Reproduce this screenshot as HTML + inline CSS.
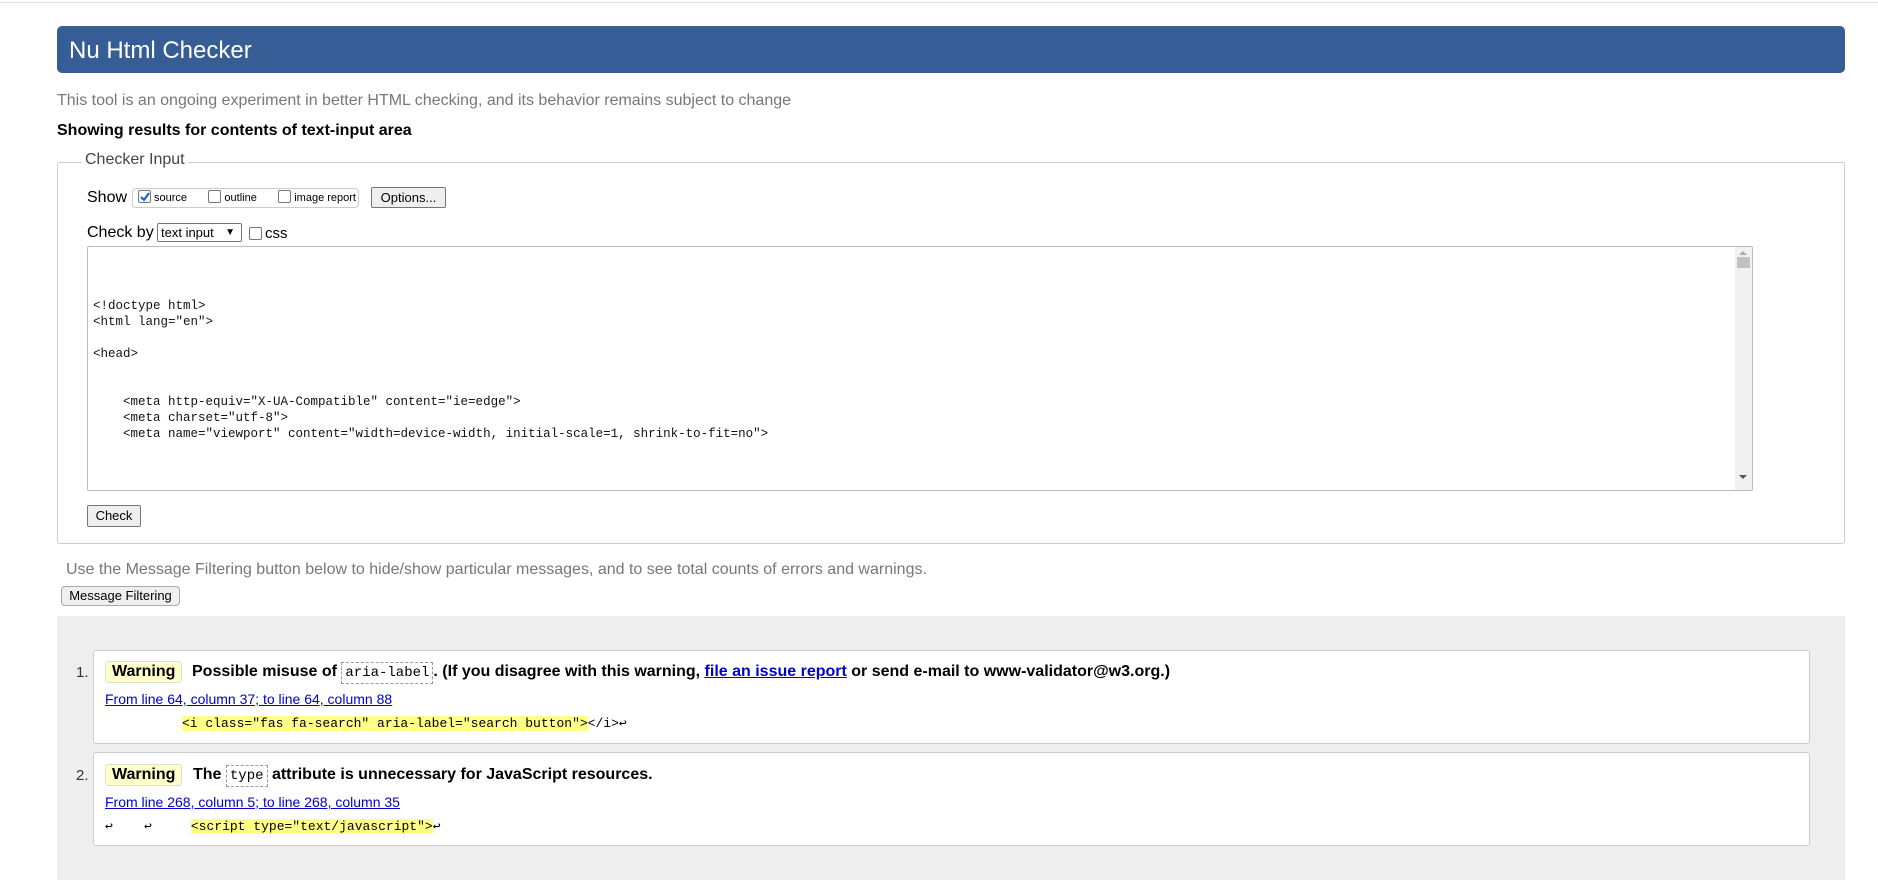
<!DOCTYPE html>
<html><head><meta charset="utf-8"><style>
*{box-sizing:border-box}
body{margin:0;width:1878px;height:882px;background:#fff;font-family:"Liberation Sans",Arial,sans-serif;position:relative;overflow:hidden;color:#000}
.a{position:absolute;white-space:nowrap}
.topline{left:0;top:0;width:1878px;height:3px;border-bottom:1px solid #ddd}
.hdr{left:57px;top:26px;width:1788px;height:47px;background:#365d95;border-radius:5px;color:#fff;font-size:24px;line-height:49px;padding-left:12px}
.grey{color:#777;font-size:16px}
.fs{left:57px;top:162px;width:1788px;height:382px;border:1px solid #ccc;border-radius:3px}
.leg{left:82px;top:151px;background:#fff;padding:0 3px;font-size:16px;color:#444}
.btn{background:#efefef;border:1px solid #767676;border-radius:2px;font-size:13px;text-align:center;color:#000}
.cb{display:inline-block;width:13px;height:13px;border:1px solid #767676;border-radius:2px;background:#fff;vertical-align:-2px;margin-right:3px}
.ta{left:87px;top:246px;width:1666px;height:245px;border:1px solid #bbb;border-radius:2px;background:#fff;overflow:hidden}
.code{position:absolute;left:5px;top:3px;font-family:"Liberation Mono",monospace;font-size:12.5px;line-height:16px;white-space:pre;color:#111}
.sb{position:absolute;right:0;top:0;width:17px;height:100%;background:#f1f1f1}
.res{left:57px;top:616px;width:1788px;height:264px;background:#eee}
.msg{left:93px;width:1717px;height:94px;background:#fff;border:1px solid #ccc;border-radius:3px}
.num{font-size:15px;color:#333}
.warn{background:#ffc;border:1px solid #ddd;border-radius:3px;font-weight:bold;font-size:16px;padding:0 6px;line-height:20px}
.mt{font-weight:bold;font-size:16px}
.ct{font-family:"Liberation Mono",monospace;font-weight:normal;font-size:14px;border:1px dashed #999;padding:2px 3px}
.lnk{color:#00c;text-decoration:underline;font-size:14px}
.hl{background:#ff8;}
.cd{font-family:"Liberation Mono",monospace;font-size:13px}
</style></head><body>
<div class="a topline"></div>
<div class="a hdr">Nu Html Checker</div>
<div class="a grey" style="left:57px;top:92px">This tool is an ongoing experiment in better HTML checking, and its behavior remains subject to change</div>
<div class="a" style="left:57px;top:122px;font-weight:bold;font-size:16px">Showing results for contents of text-input area</div>
<div class="a fs"></div>
<div class="a leg">Checker Input</div>
<div class="a" style="left:87px;top:189px;font-size:16px">Show</div>
<div class="a" style="left:132px;top:188px;width:227px;height:20px;border:1px solid #ccc;border-radius:4px;font-size:11px;line-height:19px;padding-left:5px"><span class="cb" style="background:#fff;position:relative"><svg width="11" height="11" style="position:absolute;left:0;top:0"><path d="M2 6l3 3 5-7" stroke="#0060df" stroke-width="2" fill="none"/></svg></span>source &nbsp; &nbsp; &nbsp; <span class="cb"></span>outline &nbsp; &nbsp; &nbsp; <span class="cb"></span>image report</div>
<div class="a btn" style="left:371px;top:187px;width:75px;height:21px;line-height:19px">Options...</div>
<div class="a" style="left:87px;top:224px;font-size:16px">Check by</div>
<div class="a" style="left:157px;top:223px;width:85px;height:19px;border:1px solid #767676;border-radius:2px;font-size:13px;line-height:17px;padding-left:3px">text input <span style="font-size:10px;position:absolute;right:6px">&#9660;</span></div>
<div class="a" style="left:249px;top:225px;font-size:15px"><span class="cb"></span>css</div>
<div class="a ta"><div class="code">


&lt;!doctype html&gt;
&lt;html lang="en"&gt;

&lt;head&gt;


    &lt;meta http-equiv="X-UA-Compatible" content="ie=edge"&gt;
    &lt;meta charset="utf-8"&gt;
    &lt;meta name="viewport" content="width=device-width, initial-scale=1, shrink-to-fit=no"&gt;</div>
<div class="sb"><div style="position:absolute;left:4px;top:4px;border:4px solid transparent;border-bottom-color:#aaa;border-top:0"></div><div style="position:absolute;left:2px;top:10px;width:13px;height:11px;background:#c1c1c1"></div><div style="position:absolute;left:4px;top:228px;border:4px solid transparent;border-top-color:#555;border-bottom:0"></div></div></div>
<div class="a btn" style="left:87px;top:505px;width:54px;height:22px;line-height:20px">Check</div>
<div class="a grey" style="left:66px;top:561px">Use the Message Filtering button below to hide/show particular messages, and to see total counts of errors and warnings.</div>
<div class="a btn" style="left:61px;top:586px;width:119px;height:20px;line-height:18px;border-color:#aaa;border-radius:4px">Message Filtering</div>
<div class="a res"></div>
<div class="a msg" style="top:650px"></div>
<div class="a msg" style="top:752px"></div>
<div class="a num" style="left:76px;top:664px">1.</div>
<div class="a warn" style="left:105px;top:661px">Warning</div>
<div class="a mt" style="left:192px;top:663px">Possible misuse of <span class="ct">aria-label</span>. (If you disagree with this warning, <span style="color:#00c;text-decoration:underline">file an issue report</span> or send e-mail to www-validator@w3.org.)</div>
<div class="a lnk" style="left:105px;top:691px">From line 64, column 37; to line 64, column 88</div>
<div class="a cd" style="left:182px;top:716px"><span class="hl">&lt;i class="fas fa-search" aria-label="search button"&gt;</span>&lt;/i&gt;↩</div>
<div class="a num" style="left:76px;top:767px">2.</div>
<div class="a warn" style="left:105px;top:764px">Warning</div>
<div class="a mt" style="left:193px;top:766px">The <span class="ct">type</span> attribute is unnecessary for JavaScript resources.</div>
<div class="a lnk" style="left:105px;top:794px">From line 268, column 5; to line 268, column 35</div>
<div class="a cd" style="left:105px;top:819px">↩&nbsp;&nbsp;&nbsp;&nbsp;↩&nbsp;&nbsp;&nbsp;&nbsp;&nbsp;<span class="hl">&lt;script type="text/javascript"&gt;</span>↩</div>
</body></html>
